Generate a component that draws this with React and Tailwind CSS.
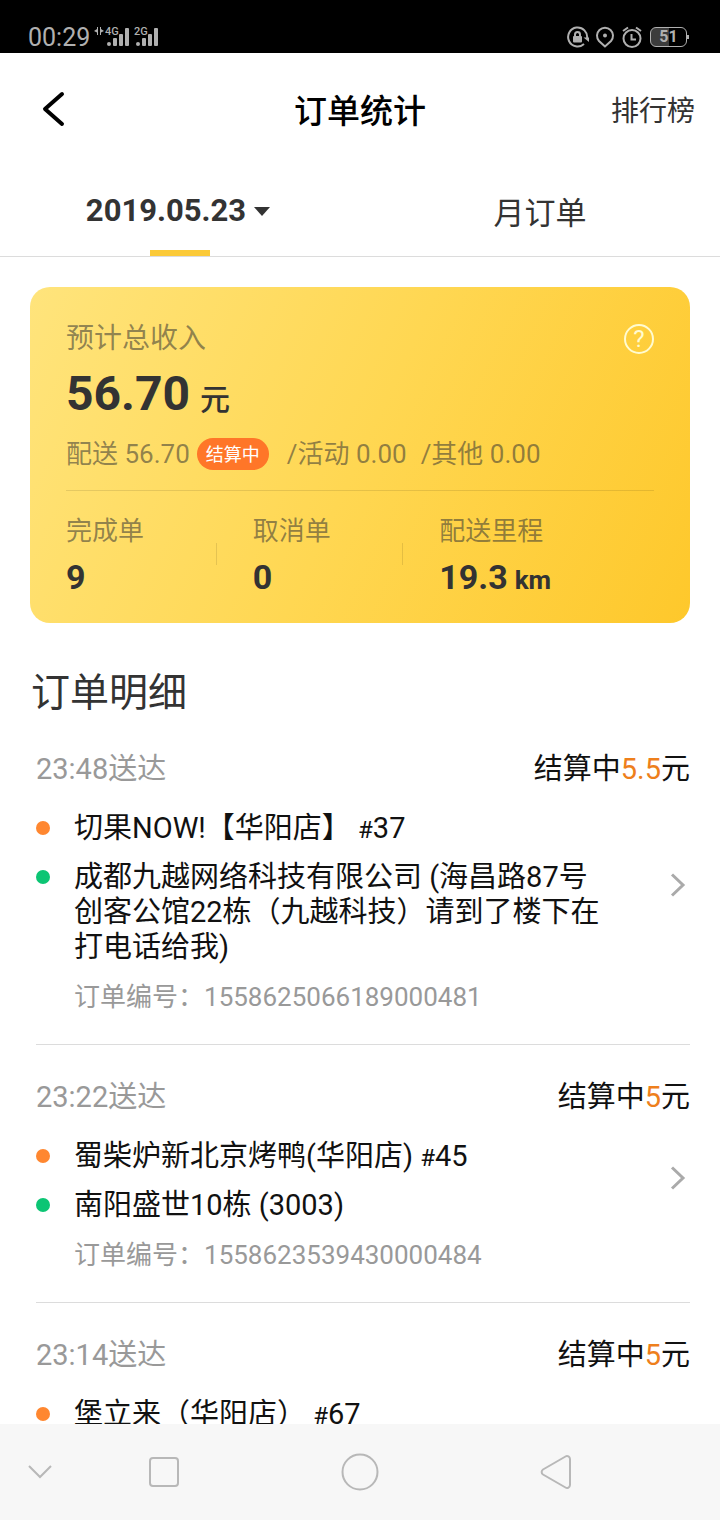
import { useState } from "react";

const orders = [
  {
    id: "1558625066189000481",
    time: "23:48",
    fee: "5.5",
    shop: "切果NOW!【华阳店】",
    no: "37",
    address: "成都九越网络科技有限公司 (海昌路87号创客公馆22栋（九越科技）请到了楼下在打电话给我)",
  },
  {
    id: "1558623539430000484",
    time: "23:22",
    fee: "5",
    shop: "蜀柴炉新北京烤鸭(华阳店)",
    no: "45",
    address: "南阳盛世10栋 (3003)",
  },
  {
    id: "1558623054120000487",
    time: "23:14",
    fee: "5",
    shop: "堡立来（华阳店）",
    no: "67",
    address: "华阳大道二段18号",
  },
];

const stats = [
  { label: "完成单", value: "9" },
  { label: "取消单", value: "0" },
  { label: "配送里程", value: "19.3", unit: "km" },
];

function Signal({ label }) {
  return (
    <svg width="26" height="22" viewBox="0 0 26 22" fill="currentColor">
      <text x="0" y="9" fontSize="11" fontWeight="500">{label}</text>
      <circle cx="4" cy="18" r="2" />
      <rect x="8" y="12" width="4" height="8" rx="1" />
      <rect x="14" y="8" width="4" height="12" rx="1" />
      <rect x="20" y="2" width="4" height="18" rx="1" />
    </svg>
  );
}

function StatusBar() {
  return (
    <div className="flex h-[53px] shrink-0 items-center justify-between bg-black pt-5 pr-[31px] pl-7 text-[#b0b0b0]">
      <div className="flex items-center">
        <span className="pt-[2px] text-[25px] leading-8">00:29</span>
        <svg className="ml-1 mb-3" width="10" height="8" viewBox="0 0 10 8" fill="currentColor">
          <path d="M4 0v8H3V5.500L0 4l3-2V0zM6 0v8h1V5.500L10 4 7 2V0z" />
        </svg>
        <span className="ml-px flex gap-[3px]">
          <Signal label="4G" />
          <Signal label="2G" />
        </span>
      </div>
      <div className="flex items-center gap-1">
        <svg width="24" height="24" viewBox="0 0 24 24" fill="none" stroke="currentColor" strokeWidth="2">
          <path d="M18 19A9.500 9.500 0 1 1 21 13.500" />
          <path d="M17.500 12.500h5.500v4.500z" fill="currentColor" stroke="none" />
          <rect x="7" y="11" width="9" height="6.500" rx="1" fill="currentColor" stroke="none" />
          <path d="M9 11V9.500a2.500 2.500 0 0 1 5 0V11" />
        </svg>
        <svg width="22" height="24" viewBox="0 0 22 24" fill="none" stroke="currentColor" strokeWidth="2">
          <path d="M11 21.500 5 16a8 8 0 1 1 12 0z" />
          <circle cx="11" cy="10.500" r="2" fill="currentColor" stroke="none" />
        </svg>
        <svg width="24" height="24" viewBox="0 0 24 24" fill="none" stroke="currentColor" strokeWidth="2">
          <circle cx="12" cy="13.500" r="8.500" />
          <path d="M11.500 9v5.500H16M3 6 8 2.500M21 6 16 2.500" />
        </svg>
        <span className="ml-[2px] flex items-center">
          <span className="flex h-5 w-[37px] items-center justify-center rounded-md border border-current bg-linear-to-r from-[#3c3c3c] from-50% to-black to-50% text-base font-bold">
            51
          </span>
          <span className="h-1 w-[2px] bg-current" />
        </span>
      </div>
    </div>
  );
}

function Header() {
  return (
    <header className="flex h-28 shrink-0 items-center pr-[25px] pl-10">
      <div className="flex w-[85px]">
        <button aria-label="返回">
          <svg width="26" height="36" viewBox="0 0 26 36" fill="none" stroke="#000" strokeWidth="4" strokeLinecap="round" strokeLinejoin="round">
            <path d="M22 3 5 18l17 15" />
          </svg>
        </button>
      </div>
      <h1 className="flex-1 pt-[5px] pr-[15px] text-center text-[33px] font-medium text-black">订单统计</h1>
      <a href="#rank" className="w-[85px] pt-[5px] text-right text-[28px] whitespace-nowrap">排行榜</a>
    </header>
  );
}

function Tabs({ tab, setTab }) {
  return (
    <div className="grid h-[92px] shrink-0 grid-cols-2 border-b border-[#dcdcdc]">
      <button className="flex flex-col items-center" onClick={() => setTab("day")}>
        <span className="flex flex-1 items-center gap-2 pt-2 pr-1 text-[31px] font-bold">
          2019.05.23
          <svg width="16" height="9" viewBox="0 0 16 9" fill="currentColor">
            <path d="M0 0h16L8 9z" />
          </svg>
        </span>
        {tab === "day" && <span className="h-[6px] w-[60px] bg-[#fbca38]" />}
      </button>
      <button className="flex flex-col items-center" onClick={() => setTab("month")}>
        <span className="flex flex-1 items-center pt-2 text-[31px]">月订单</span>
        {tab === "month" && <span className="h-[6px] w-[60px] bg-[#fbca38]" />}
      </button>
    </div>
  );
}

function IncomeCard() {
  return (
    <section className="mx-[30px] mt-[30px] rounded-[20px] bg-linear-[115deg] from-[#ffe47c] via-[#ffd752] to-[#fec82b] px-9 pt-[30px] pb-[23px]">
      <div className="flex h-11 items-center justify-between text-[28px] text-[#333]/55">
        <h2>预计总收入</h2>
        <button
          aria-label="说明"
          className="flex size-[30px] items-center justify-center rounded-full border-2 border-[#fffbd0] text-2xl leading-none text-[#fffbd0]"
        >
          ?
        </button>
      </div>
      <p className="flex h-[66px] items-center font-bold">
        <span className="flex items-baseline gap-[10px] text-[48px]">
          56.70
          <span className="text-[30px] font-medium">元</span>
        </span>
      </p>
      <div className="flex h-[54px] items-center text-[26px] whitespace-nowrap text-[#333]/55">
        <span>配送 56.70</span>
        <span className="ml-[7px] flex h-8 w-[72px] items-center justify-center rounded-full bg-[#ff7628] text-[18px] text-white">
          结算中
        </span>
        <span className="ml-[18px]">/活动 0.00</span>
        <span className="ml-[14px]">/其他 0.00</span>
      </div>
      <div className="mt-[9px] border-t border-black/10 pt-[17px]">
        <dl className="grid grid-cols-3 pr-7">
          {stats.map((s, i) => (
            <div key={s.label} className="flex items-center justify-between pr-9 whitespace-nowrap">
              <div>
                <dt className="flex h-[46px] items-center text-[26px] text-[#333]/55">{s.label}</dt>
                <dd className="flex h-[46px] items-center font-bold">
                  <span className="flex items-baseline gap-[7px] text-[34px]">
                    {s.value}
                    {s.unit && <span className="text-[26px]">{s.unit}</span>}
                  </span>
                </dd>
              </div>
              {i < stats.length - 1 && <span className="h-[22px] w-px bg-black/10" />}
            </div>
          ))}
        </dl>
      </div>
    </section>
  );
}

function OrderItem({ order }) {
  return (
    <li className="border-b border-[#dcdcdc] pt-[33px] pb-[29px]">
      <div className="flex h-10 items-center justify-between text-[29px]">
        <span className="text-[#999]">{order.time}送达</span>
        <span className="text-[#111]">
          结算中<span className="text-[#ee7f1c]">{order.fee}</span>元
        </span>
      </div>
      <a href={`#${order.id}`} className="mt-[21px] flex items-center justify-between text-[29px] leading-[35px] text-[#111]">
        <span className="flex flex-col gap-[14px]">
          <span className="flex gap-6">
            <span className="mt-[10px] size-[14px] shrink-0 rounded-full bg-[#ff8730]" />
            <span>
              {order.shop} <span className="text-2xl leading-none">#</span>{order.no}
            </span>
          </span>
          <span className="flex gap-6">
            <span className="mt-[10px] size-[14px] shrink-0 rounded-full bg-[#0cc574]" />
            <span className="break-all">{order.address}</span>
          </span>
        </span>
        <svg className="mr-1 mb-[6px] ml-[60px] shrink-0" width="16" height="24" viewBox="0 0 16 24" fill="none" stroke="#aaa" strokeWidth="3">
          <path d="M2 1.500 13 12 2 22.500" />
        </svg>
      </a>
      <p className="mt-[14px] pl-[38px] text-[26px] leading-9 text-[#999]">订单编号：{order.id}</p>
    </li>
  );
}

function NavBar() {
  return (
    <nav className="flex h-24 shrink-0 items-center bg-[#f7f7f7] text-[#b8b8b8]">
      <button aria-label="收起" className="flex w-1/9 justify-center">
        <svg width="24" height="16" viewBox="0 0 24 16" fill="none" stroke="currentColor" strokeWidth="2">
          <path d="M1 2l11 11L23 2" />
        </svg>
      </button>
      <div className="flex flex-1 items-center justify-between pr-[148px] pl-[68px]">
        <button aria-label="最近任务">
          <svg width="32" height="32" viewBox="0 0 32 32" fill="none" stroke="currentColor" strokeWidth="2">
            <rect x="2" y="2" width="28" height="28" rx="3" />
          </svg>
        </button>
        <button aria-label="主屏幕">
          <svg width="38" height="38" viewBox="0 0 38 38" fill="none" stroke="currentColor" strokeWidth="2">
            <circle cx="19" cy="19" r="17.500" />
          </svg>
        </button>
        <button aria-label="返回上一页">
          <svg width="32" height="36" viewBox="0 0 32 36" fill="none" stroke="currentColor" strokeWidth="2">
            <path d="M3 15.500 25.500 2.500a3 3 0 0 1 4.500 2.500v26a3 3 0 0 1-4.500 2.500L3 20.500a3 3 0 0 1 0-5z" />
          </svg>
        </button>
      </div>
    </nav>
  );
}

export default function App() {
  const [tab, setTab] = useState("day");

  return (
    <div className="flex h-screen flex-col bg-white font-[Roboto,'Noto_Sans_CJK_SC',sans-serif] text-[#333]">
      <StatusBar />
      <Header />
      <Tabs tab={tab} setTab={setTab} />
      <main className="min-h-0 flex-1 overflow-y-auto [scrollbar-width:none]">
        <IncomeCard />
        <h2 className="mt-[47px] flex h-[47px] items-center pl-[31px] text-[39px]">订单明细</h2>
        <ul className="pr-[30px] pl-9">
          {orders.map((order) => (
            <OrderItem key={order.id} order={order} />
          ))}
        </ul>
      </main>
      <NavBar />
    </div>
  );
}
